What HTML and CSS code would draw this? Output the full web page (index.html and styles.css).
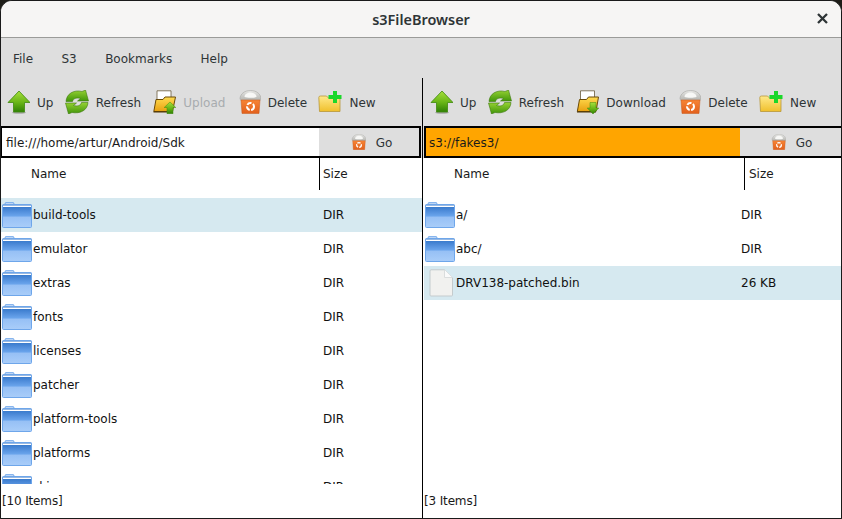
FILE: index.html
```html
<!DOCTYPE html>
<html lang="en">
<head>
<meta charset="utf-8">
<title>s3FileBrowser</title>
<link rel="stylesheet" href="styles.css">
</head>
<body>
<svg class="defs" width="0" height="0" aria-hidden="true">
  <defs>
    <linearGradient id="gGreen" x1="0" y1="0" x2="0" y2="1"><stop offset="0" stop-color="#a6e03c"/><stop offset=".55" stop-color="#68b416"/><stop offset="1" stop-color="#2f8004"/></linearGradient>
    <linearGradient id="gRef" x1="0" y1="0" x2="0" y2="1"><stop offset="0" stop-color="#96d234"/><stop offset="1" stop-color="#3f9408"/></linearGradient>
    <linearGradient id="gBlue" x1="0" y1="0" x2="0" y2="1"><stop offset="0" stop-color="#2c6fc4"/><stop offset=".5" stop-color="#6aa4ec"/><stop offset=".55" stop-color="#96c0f5"/><stop offset="1" stop-color="#a9cdf9"/></linearGradient>
    <linearGradient id="gYellow" x1="0" y1="0" x2="0" y2="1"><stop offset="0" stop-color="#ffe98a"/><stop offset="1" stop-color="#f0c02c"/></linearGradient>
    <linearGradient id="gYellowDeep" x1="0" y1="0" x2="0" y2="1"><stop offset="0" stop-color="#ffdc50"/><stop offset="1" stop-color="#e8a010"/></linearGradient>
    <linearGradient id="gOrange" x1="0" y1="0" x2="0" y2="1"><stop offset="0" stop-color="#f68436"/><stop offset="1" stop-color="#e2601c"/></linearGradient>
    <linearGradient id="gLid" x1="0" y1="0" x2="0" y2="1"><stop offset="0" stop-color="#e8e8e6"/><stop offset="1" stop-color="#b0b0ac"/></linearGradient>

    <symbol id="i-up" viewBox="0 0 24 24">
      <ellipse cx="13" cy="22.6" rx="7" ry="1.2" fill="#000" opacity=".25"/>
      <path d="M13 1 24 12.5H18.500V22H7.500V12.500H2Z" fill="url(#gGreen)" stroke="#3f8a0c" stroke-width=".8" stroke-linejoin="round"/>
    </symbol>
    <symbol id="i-refresh" viewBox="0 0 24 24">
      <g fill="url(#gRef)" stroke="#3f7a10" stroke-width=".6" stroke-linejoin="round">
        <path d="M1 11.500C1.500 3.500 9-.5 17 1.500L20.500 0 23.500 11 12.500 11 15.500 8.500C12 7.500 8.500 8 7.500 11.500Z"/>
        <path d="M23 12.500C22.500 20.500 15 24 7 22.500L3.500 24 .5 13 11.500 13 8.500 15.500C12 16.500 15.500 16 16.500 12.500Z"/>
      </g>
    </symbol>
    <symbol id="i-upload" viewBox="0 0 24 24">
      <g transform="translate(1 0)">
        <path d="M4 .8H18V13H4Z" fill="#fff" stroke="#6a5a3a" stroke-width=".8"/>
        <path d="M.8 21.500 3 9.500 10 9.500 12 7 22.500 7 19.500 21.500Z" fill="url(#gYellowDeep)" stroke="#6a4a08"/>
        <path d="M.5 22H19.500" stroke="#4a3406" stroke-width="1.200"/>
        <path d="M17 12 22.800 17.500H20V23.800H14V17.500H11.200Z" fill="url(#gGreen)" stroke="#3f8a0c" stroke-width=".5"/>
      </g>
    </symbol>
    <symbol id="i-download" viewBox="0 0 24 24">
      <g transform="translate(1.500 0)">
        <path d="M4 .8H18V13H4Z" fill="#fff" stroke="#6a5a3a" stroke-width=".8"/>
        <path d="M.8 21.500 3 9.500 10 9.500 12 7 22 7 19.500 21.500Z" fill="url(#gYellowDeep)" stroke="#6a4a08"/>
        <path d="M.5 22H19.500" stroke="#4a3406" stroke-width="1.200"/>
        <path d="M16.500 24 22.300 18H19.500V12.500H13.500V18H10.700Z" fill="url(#gGreen)" stroke="#3f8a0c" stroke-width=".5"/>
      </g>
    </symbol>
    <symbol id="i-delete" viewBox="0 0 24 24">
      <g transform="translate(1.500 0)">
        <path d="M1.500 9C1.500 4 6 .5 12 .5S22.500 4 22.500 9L21 11H3Z" fill="url(#gLid)" stroke="#a8a8a4" stroke-width=".6"/>
        <path d="M6 7C6 4 9 2.500 12 2.500 15 2.500 18 4 18 7 15 8 9 8 6 7Z" fill="#f8f8f6"/>
        <path d="M2.500 10H21.500L20.500 23.500H3.500Z" fill="url(#gOrange)" stroke="#c9581a" stroke-width=".5"/>
        <circle cx="12" cy="16.500" r="3.500" fill="none" stroke="#fff" stroke-width="2" stroke-dasharray="4.700 1.500"/>
      </g>
    </symbol>
    <symbol id="i-new" viewBox="0 0 24 24">
      <path d="M1.500 21.500 .8 7.500Q.8 6 2.500 6H8.500L10.500 8H22V21.500Z" fill="url(#gYellow)" stroke="#b8973a" stroke-width=".8"/>
      <path d="M15 1H19V5H23.500V9H19V13H15V9H10.500V5H15Z" fill="#1bd72a"/>
    </symbol>
    <symbol id="i-folder" viewBox="0 0 30 26">
      <path d="M2.500 3 3.500 .7H11.500L12.500 3" fill="#cfe0f7" stroke="#6ea6ea"/>
      <rect x=".5" y="2.500" width="29" height="23" rx="1" fill="url(#gBlue)" stroke="#6ea6ea"/>
      <rect x="1" y="3.500" width="28" height="1.500" fill="#fff"/>
    </symbol>
    <symbol id="i-file" viewBox="0 0 24 28">
      <path d="M1 2Q1 .8 2 .8H15.500L23.500 8.500V26Q23.500 27 22.500 27H2Q1 27 1 26Z" fill="#f1f1ef" stroke="#c4cbcd"/>
      <path d="M15.500 .8V8.500H23.500" fill="#fafafa" stroke="#dadddd"/>
    </symbol>
  </defs>
</svg>

<div class="window">
  <header class="titlebar">
    <span class="title">s3FileBrowser</span>
    <svg class="close" width="11" height="11" viewBox="0 0 11 11"><path d="M1 1 10 10M10 1 1 10" stroke="#2e3436" stroke-width="2.300"/></svg>
  </header>

  <nav class="menubar">
    <span>File</span><span>S3</span><span>Bookmarks</span><span>Help</span>
  </nav>

  <main class="panes">
    <section class="pane pane-left">
      <div class="toolbar">
        <span class="tool"><svg class="ticon"><use href="#i-up"/></svg>Up</span>
        <span class="tool"><svg class="ticon"><use href="#i-refresh"/></svg>Refresh</span>
        <span class="tool disabled"><svg class="ticon"><use href="#i-upload"/></svg>Upload</span>
        <span class="tool"><svg class="ticon"><use href="#i-delete"/></svg>Delete</span>
        <span class="tool"><svg class="ticon"><use href="#i-new"/></svg>New</span>
      </div>
      <div class="address">
        <span class="url">file:///home/artur/Android/Sdk</span>
        <span class="go"><svg class="gicon"><use href="#i-delete"/></svg>Go</span>
      </div>
      <div class="head"><span class="hname">Name</span><span class="hsize">Size</span></div>
      <div class="rows">
        <div class="row selected"><span class="cell"><svg class="folder"><use href="#i-folder"/></svg>build-tools</span><span>DIR</span></div>
        <div class="row"><span class="cell"><svg class="folder"><use href="#i-folder"/></svg>emulator</span><span>DIR</span></div>
        <div class="row"><span class="cell"><svg class="folder"><use href="#i-folder"/></svg>extras</span><span>DIR</span></div>
        <div class="row"><span class="cell"><svg class="folder"><use href="#i-folder"/></svg>fonts</span><span>DIR</span></div>
        <div class="row"><span class="cell"><svg class="folder"><use href="#i-folder"/></svg>licenses</span><span>DIR</span></div>
        <div class="row"><span class="cell"><svg class="folder"><use href="#i-folder"/></svg>patcher</span><span>DIR</span></div>
        <div class="row"><span class="cell"><svg class="folder"><use href="#i-folder"/></svg>platform-tools</span><span>DIR</span></div>
        <div class="row"><span class="cell"><svg class="folder"><use href="#i-folder"/></svg>platforms</span><span>DIR</span></div>
        <div class="row"><span class="cell"><svg class="folder"><use href="#i-folder"/></svg>skins</span><span>DIR</span></div>
        <div class="row"><span class="cell"><svg class="folder"><use href="#i-folder"/></svg>sources</span><span>DIR</span></div>
      </div>
      <div class="status">[10 Items]</div>
    </section>

    <section class="pane pane-right">
      <div class="toolbar">
        <span class="tool"><svg class="ticon"><use href="#i-up"/></svg>Up</span>
        <span class="tool"><svg class="ticon"><use href="#i-refresh"/></svg>Refresh</span>
        <span class="tool"><svg class="ticon"><use href="#i-download"/></svg>Download</span>
        <span class="tool"><svg class="ticon"><use href="#i-delete"/></svg>Delete</span>
        <span class="tool"><svg class="ticon"><use href="#i-new"/></svg>New</span>
      </div>
      <div class="address">
        <span class="url">s3://fakes3/</span>
        <span class="go"><svg class="gicon"><use href="#i-delete"/></svg>Go</span>
      </div>
      <div class="head"><span class="hname">Name</span><span class="hsize">Size</span></div>
      <div class="rows">
        <div class="row"><span class="cell"><svg class="folder"><use href="#i-folder"/></svg>a/</span><span>DIR</span></div>
        <div class="row"><span class="cell"><svg class="folder"><use href="#i-folder"/></svg>abc/</span><span>DIR</span></div>
        <div class="row selected"><span class="cell"><svg class="file"><use href="#i-file"/></svg>DRV138-patched.bin</span><span>26 KB</span></div>
      </div>
      <div class="status">[3 Items]</div>
    </section>
  </main>
</div>
</body>
</html>
```

FILE: styles.css
```css
* { box-sizing: border-box; }

html, body {
  margin: 0;
  height: 100%;
  background: #1d1c17;
  overflow: hidden;
}

.defs { display: block; height: 0; }

.window {
  width: 842px;
  height: 519px;
  display: flex;
  flex-direction: column;
  border: 1px solid #1a1a1a;
  border-radius: 12px 12px 0 0;
  overflow: hidden;
  background: #dedede;
  font: 12px/1 "DejaVu Sans", sans-serif;
  color: #2e3436;
}

.titlebar {
  flex: none;
  height: 37px;
  display: flex;
  align-items: center;
  justify-content: center;
  position: relative;
  background: #f6f5f4;
  border-bottom: 1px solid #9b9b99;
}

.title {
  font: 600 14.45px "Noto Sans", sans-serif;
  color: #2e3436;
}

.close {
  position: absolute;
  right: 13px;
  top: 12px;
}

.menubar {
  flex: none;
  height: 40px;
  display: flex;
  align-items: center;
  gap: 28.4px;
  padding: 2px 0 0 12px;
}

.panes {
  flex: 1;
  min-height: 0;
  display: flex;
}

.pane {
  min-width: 0;
  display: flex;
  flex-direction: column;
}

.pane-left { width: 421px; }

.pane-right {
  flex: 1;
  border-left: 1px solid #000;
}

.toolbar {
  flex: none;
  height: 48px;
  display: flex;
  align-items: center;
  gap: 11.3px;
  padding-left: 5px;
}

.pane-right .toolbar { padding-left: 6px; }

.tool {
  display: flex;
  align-items: center;
  gap: 7px;
  padding-top: 2px;
}

.tool.disabled { color: #a8acaf; }

.ticon {
  width: 24px;
  height: 24px;
  flex: none;
  margin-top: -2px;
}

.address {
  flex: none;
  height: 32px;
  display: flex;
  border: 2px solid #000;
  color: #1a1a1a;
}

.pane-left .address { border-left-width: 1px; margin-right: 1px; }
.pane-right .address { border-right-width: 0; margin-left: 1px; }

.url {
  flex: 1;
  display: flex;
  align-items: center;
  padding: 1px 0 0 4px;
  background: #fff;
}

.pane-right .url { background: #ffa500; padding-left: 3px; }

.go {
  flex: none;
  width: 100px;
  display: flex;
  align-items: center;
  justify-content: center;
  gap: 10px;
  background: #dedede;
  color: #2e3436;
  padding: 1px 0 0 4px;
}

.pane-right .go { width: 101px; padding-left: 1px; }

.gicon { width: 16px; height: 16px; margin-top: -1px; }

.head {
  flex: none;
  height: 40px;
  padding-bottom: 8px;
  display: grid;
  background: #fff;
  color: #1a1a1a;
}

.pane-left .head { grid-template-columns: 318px 1fr; }
.pane-right .head { grid-template-columns: 321px 1fr; }

.hname {
  display: flex;
  align-items: center;
  padding-left: 30px;
}

.pane-right .hname { padding-left: 31px; }

.hsize {
  display: flex;
  align-items: center;
  padding-left: 3px;
  border-left: 1px solid #000;
}

.pane-right .hsize { padding-left: 4px; }

.rows {
  flex: 1;
  min-height: 0;
  overflow: hidden;
  background: #fff;
  color: #111;
}

.row {
  height: 34px;
  display: grid;
  align-items: center;
  padding-left: 1px;
}

.pane-left .row { grid-template-columns: 321px 1fr; }
.pane-right .row { grid-template-columns: 316px 1fr; margin-left: 1px; }

.row.selected { background: #d6e9f0; }

.cell {
  display: flex;
  align-items: center;
  gap: 1px;
}

.folder { width: 30px; height: 26px; flex: none; }

.file {
  width: 24px;
  height: 28px;
  flex: none;
  margin: 0 2px 0 4px;
}

.status {
  flex: none;
  height: 34px;
  display: flex;
  align-items: center;
  padding-left: 1px;
  letter-spacing: -0.15px;
  background: #fff;
  color: #1a1a1a;
}
```
